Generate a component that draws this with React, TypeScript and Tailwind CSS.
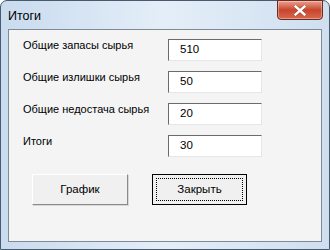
const rows = [
  { label: 'Общие запасы сырья', value: '510' },
  { label: 'Общие излишки сырья', value: '50' },
  { label: 'Общие недостача сырья', value: '20' },
  { label: 'Итоги', value: '30' },
];

const font = { fontFamily: '"Liberation Sans", Arial, sans-serif' };

const CloseButton = () => (
  <div className="w-[46px] h-[20px] mt-[-1px] rounded-b-[4px] border border-[#6d2a1e] bg-gradient-to-b from-[#e8a08e] via-[#c8452c] to-[#d5684e] flex items-center justify-center shadow-[inset_0_0_0_1px_rgba(255,255,255,0.35)]">
    <svg width="12" height="11" viewBox="0 0 12 11">
      <path
        d="M1.5 1.5 L10.5 9.5 M10.5 1.5 L1.5 9.5"
        stroke="#5a1c12"
        strokeWidth="3.6"
        strokeLinecap="square"
        opacity="0.35"
      />
      <path
        d="M1.5 1.5 L10.5 9.5 M10.5 1.5 L1.5 9.5"
        stroke="#ffffff"
        strokeWidth="2.4"
        strokeLinecap="square"
      />
    </svg>
  </div>
);

const Field = ({ value }: { value: string }) => (
  <div className="w-[94px] h-[22px] bg-white border border-t-[#6b6b6b] border-l-[#6b6b6b] border-r-[#e6e6e6] border-b-[#e6e6e6] flex items-center pl-[11px] text-[11.5px] text-black">
    {value}
  </div>
);

export default function App() {
  return (
    <div
      className="w-[330px] h-[250px] rounded-t-[7px] border border-[#4a5a6e] bg-gradient-to-r from-[#c9dbee] via-[#e4eef8] to-[#cfdff0] flex flex-col"
      style={font}
    >
      <div className="h-[28px] flex items-start justify-between pl-[7px] pr-[6px]">
        <span className="mt-[6px] text-[12.5px] text-black">Итоги</span>
        <CloseButton />
      </div>
      <div className="mx-[7px] h-[213px] border border-[#7f8a97] bg-[#f4f4f4] flex flex-col pt-[9px] pl-[14px]">
        <div className="flex flex-col gap-[10px]">
          {rows.map((r) => (
            <div key={r.label} className="flex items-start h-[22px]">
              <span className="w-[145px] -mt-px leading-[14px] text-[11px] text-black">{r.label}</span>
              <Field value={r.value} />
            </div>
          ))}
        </div>
        <div className="flex gap-[24px] mt-[17px] ml-[9px]">
          <button className="w-[96px] h-[31px] bg-[#f0f0f0] border border-t-white border-l-white border-r-[#8a8a8a] border-b-[#8a8a8a] shadow-[1px_1px_0_#d8d8d8] text-[11.5px] text-black">
            График
          </button>
          <button className="w-[95px] h-[31px] bg-[#f0f0f0] border border-black p-[3px] text-[11.5px] text-black">
            <div className="w-full h-full border border-dotted border-black flex items-center justify-center">
              Закрыть
            </div>
          </button>
        </div>
      </div>
    </div>
  );
}
